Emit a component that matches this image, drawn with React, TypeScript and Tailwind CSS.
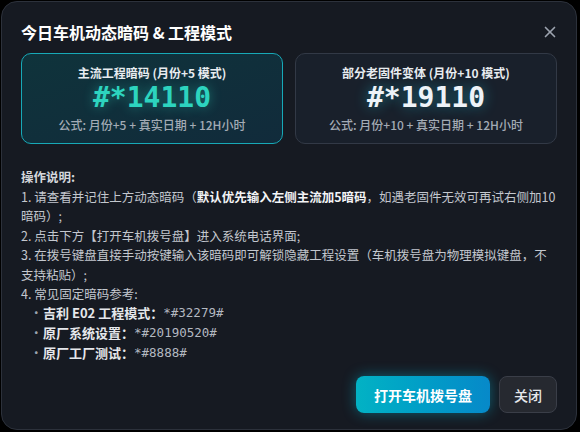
import { X } from "lucide-react";

const sans = "font-['Noto_Sans_CJK_SC','Noto_Sans',sans-serif]";
const mono = "font-['DejaVu_Sans_Mono','Liberation_Mono',monospace]";

const codes = [
  { label: "吉利 E02 工程模式", code: "*#32279#" },
  { label: "原厂系统设置", code: "*#20190520#" },
  { label: "原厂工厂测试", code: "*#8888#" },
];

export default function App() {
  return (
    <div className={`w-[580px] h-[432px] bg-black pl-px pt-px ${sans}`}>
      <div className="w-[576px] h-[429px] rounded-2xl border border-[#2c313b] bg-[#161a22] px-[19px] pt-[18px] pb-4 flex flex-col">
        <div className="flex items-center justify-between">
          <h2 className="text-base leading-6 font-bold text-white">今日车机动态暗码 &amp; 工程模式</h2>
          <button className="text-[#9ca3af] -mr-[2px]">
            <X size={18} strokeWidth={2.2} />
          </button>
        </div>

        <div className="mt-[9px] grid grid-cols-2 gap-3">
          <div className="h-[91px] rounded-[10px] border border-[#17a9b7] bg-gradient-to-br from-[#0f333b] to-[#112b3b] pt-[10px] flex flex-col items-center">
            <p className="text-xs leading-[18px] font-bold text-[#e8ecf0]">主流工程暗码 (月份+5 模式)</p>
            <p className={`${mono} text-[28px] leading-8 font-bold text-[#2dd4bf] [text-shadow:0_0_12px_rgba(45,212,191,0.45)]`}>#*14110</p>
            <p className="mt-0.5 text-xs leading-[18px] font-medium text-[#a3abb5]">公式: 月份+5 + 真实日期 + 12H小时</p>
          </div>
          <div className="h-[91px] rounded-[10px] border border-[#323946] bg-[#19202b] pt-[10px] flex flex-col items-center">
            <p className="text-xs leading-[18px] font-bold text-[#e8ecf0]">部分老固件变体 (月份+10 模式)</p>
            <p className={`${mono} text-[28px] leading-8 font-bold text-[#eef3f8] [text-shadow:0_0_14px_rgba(34,211,238,0.45)]`}>#*19110</p>
            <p className="mt-0.5 text-xs leading-[18px] font-medium text-[#a3abb5]">公式: 月份+10 + 真实日期 + 12H小时</p>
          </div>
        </div>

        <div className="mt-[23px] text-[12.5px] leading-[19.5px] text-[#c3c7ce]">
          <p className="font-bold text-[#d4d7dc]">操作说明:</p>
          <p>
            1. 请查看并记住上方动态暗码（<b className="font-bold text-[#f3f4f6]">默认优先输入左侧主流加5暗码</b>，如遇老固件无效可再试右侧加10暗码）;
          </p>
          <p>2. 点击下方【打开车机拨号盘】进入系统电话界面;</p>
          <p>3. 在拨号键盘直接手动按键输入该暗码即可解锁隐藏工程设置（车机拨号盘为物理模拟键盘，不支持粘贴）;</p>
          <p>4. 常见固定暗码参考:</p>
          <ul className="mt-[-1px]">
            {codes.map((c) => (
              <li key={c.code} className="flex items-center h-[20px] pl-[9px]">
                <span className="w-[13px] text-[#9ca3af]">·</span>
                <span className="text-[13px] font-bold text-[#e5e7eb]">{c.label}：</span>
                <span className={`${mono} text-[12.5px] text-[#b4b9c1]`}>{c.code}</span>
              </li>
            ))}
          </ul>
        </div>

        <div className="mt-auto flex justify-end gap-[9px]">
          <button className="h-[37px] w-[134px] rounded-lg bg-gradient-to-r from-[#03b2c4] to-[#0789c9] text-sm font-bold text-white shadow-[0_0_14px_rgba(6,182,212,0.45)]">
            打开车机拨号盘
          </button>
          <button className="h-[37px] w-[58px] rounded-lg border border-[#3a3e48] bg-[#262930] text-sm font-medium text-[#e5e7eb]">
            关闭
          </button>
        </div>
      </div>
    </div>
  );
}
